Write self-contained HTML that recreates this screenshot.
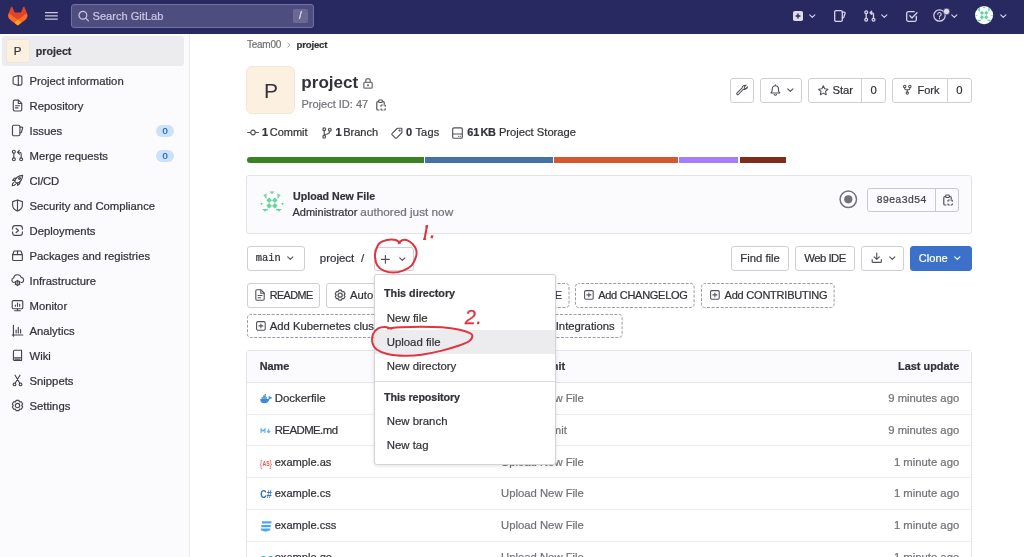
<!DOCTYPE html>
<html lang="en">
<head>
<meta charset="utf-8">
<title>Team00 / project · GitLab</title>
<style>
*{box-sizing:border-box;margin:0;padding:0}
html,body{width:1024px;height:557px;overflow:hidden;background:#fff}
body{font-family:"Liberation Sans",Arial,sans-serif;font-size:11.3px;color:#333238;position:relative;line-height:1;will-change:transform;-webkit-text-stroke:.22px currentColor}
.abs{position:absolute}
svg{display:block;overflow:visible}
.ico{position:absolute;fill:none;stroke:currentColor;stroke-width:1.2;stroke-linecap:round;stroke-linejoin:round;color:#535158}
a{color:inherit;text-decoration:none}
ul{list-style:none}
.t{position:absolute;white-space:nowrap;line-height:14px;height:14px}
.b{font-weight:700}
.mono{font-family:"Liberation Mono",monospace}
.gray{color:#737278}

/* navbar */
.navbar{position:absolute;left:0;top:0;width:1024px;height:34px;background:#292961;color:#dcdcea}
.navbar .ico{color:#d6d5ec;stroke-width:1.3}
.search{position:absolute;left:71px;top:4px;width:243px;height:24px;border-radius:3px;background:#4e4d80;border:1px solid #7170a2}
.search .ph{position:absolute;left:20.5px;top:4px;font-size:11.1px;color:#c9c7e6;line-height:14px;white-space:nowrap}
.kbd{position:absolute;left:221px;top:4px;width:15px;height:14px;border-radius:2px;background:#6a6996;color:#e3e2ee;font-size:10px;line-height:14px;text-align:center}

/* sidebar */
.sidebar{position:absolute;left:0;top:34px;width:190px;height:523px;background:#fbfafd;border-right:1px solid #eae9ee}
.ctx{position:absolute;left:2px;top:2px;width:182px;height:30px;border-radius:3px;background:#ececef}
.ctx .av{position:absolute;left:3.5px;top:3px;width:24px;height:24px;border-radius:3px;background:#fcf1e0;border:1px solid #f0e6d6;font-size:11.5px;line-height:22px;text-align:center;color:#333238}
.ctx .nm{position:absolute;left:33.8px;top:8px;font-weight:700;font-size:10.7px;line-height:14px}
.sb li{position:absolute;left:0;width:189px;height:25px}
.sb li .lbl{position:absolute;left:29.5px;top:5.5px;line-height:14px;white-space:nowrap;font-size:11.3px}
.sb li .ico{left:11px;top:6px;width:13px;height:13px;stroke-width:1.4;color:#47464d}
.badge{position:absolute;left:156px;top:6.5px;width:18px;height:12px;border-radius:6px;background:#cbe2f9;color:#1f5fa8;font-size:9.4px;line-height:12px;text-align:center}

/* buttons */
.btn{position:absolute;height:24px;border:1px solid #d0cfd5;border-radius:3px;background:#fff;font-size:11.3px;line-height:22px;white-space:nowrap;color:#333238}
.btn.dash{border-color:transparent}
.btn .db{position:absolute;left:-1px;top:-1px;fill:none;stroke:#9d9ca3;stroke-width:1;stroke-dasharray:3 1.53;stroke-dashoffset:1.5}
.btn .x{position:absolute;top:0}
.btn .cnt{position:absolute;top:0;height:23px;border-left:1px solid #d0cfd5;text-align:center}

/* project header */
.crumbs{position:absolute;left:247px;top:38px;height:14px;line-height:14px;font-size:10px;letter-spacing:-.25px;white-space:nowrap;color:#737278}
.crumbs b{color:#333238;font-weight:700;font-size:9.6px;letter-spacing:-.2px}
.crumbs .sep{display:inline-block;width:15.5px;height:6px;position:relative}
.crumbs .sep svg{position:absolute;left:6.3px;top:-.3px;fill:none;stroke:#9c9ba1;stroke-width:.9;stroke-linecap:round;stroke-linejoin:round}
.pavatar{position:absolute;left:246px;top:66px;width:49px;height:48px;padding-left:1px;-webkit-text-stroke:0;border-radius:6px;background:#fcf1e0;border:1px solid #f1e7d7;font-size:21px;line-height:47px;text-align:center;color:#333238}
.ptitle{position:absolute;left:301.3px;top:72.3px;font-size:17.1px;-webkit-text-stroke:0;line-height:22px;font-weight:700;white-space:nowrap;color:#333238}
.pid{position:absolute;left:301.5px;top:97.2px;font-size:11px;line-height:14px;white-space:nowrap;color:#737278}
.stat{position:absolute;top:125px;line-height:14px;font-size:11px;white-space:nowrap;color:#333238}
.stat b{font-weight:700}
.langbar{position:absolute;left:246.7px;top:156.7px;width:539px;height:6.2px}
.langbar i{position:absolute;top:0;height:6.2px;display:block}
.commit{position:absolute;left:246px;top:175px;width:726px;height:59px;border:1px solid #e3e2e8;border-radius:3px;background:#fbfafd}
.sha{position:absolute;left:867px;top:188px;width:91.5px;height:24px;border:1px solid #cbcad0;border-radius:3px}
.sha .mono{position:absolute;left:0;top:0;width:68px;height:22px;border-right:1px solid #cbcad0;font-size:10.4px;line-height:22px;text-align:center;color:#45444b}

/* dropdown */
.dd{position:absolute;left:374px;top:274px;width:182px;height:191px;background:#fff;border:1px solid #d4d3d9;border-radius:3px;box-shadow:0 1px 4px rgba(0,0,0,.12)}
.dd .h{position:absolute;left:9px;font-weight:700;font-size:10.75px;line-height:14px;white-space:nowrap}
.dd .i{position:absolute;left:0;width:180px;height:24px;padding-left:11.7px;font-size:11.4px;line-height:24px;white-space:nowrap}
.dd .i.hl{background:#ececef}
.dd hr{position:absolute;left:0;width:180px;top:106px;border:0;border-top:1px solid #dcdbe1}

/* file table */
.tbl{position:absolute;left:246px;top:350px;width:726px;height:230px;border:1px solid #e5e4ea;border-radius:3px;background:#fff}
.tbl .hd{position:absolute;left:0;top:0;width:724px;height:32px;background:#fbfafd;border-bottom:1px solid #e5e4ea;font-weight:700;font-size:10.9px}
.tbl .r{position:absolute;left:0;width:724px;height:32px;border-bottom:1px solid #ececef}
.tbl .c1{position:absolute;left:27.7px;top:var(--t,8px);line-height:14px;white-space:nowrap;font-size:11.4px}
.tbl .c2{position:absolute;left:254px;top:var(--t,8px);line-height:14px;white-space:nowrap;color:#737278;font-size:11.3px}
.tbl .c3{position:absolute;right:11.8px;top:var(--t,8px);line-height:14px;white-space:nowrap;color:#737278;font-size:11.3px}
.tbl .hd span{color:#333238;font-size:10.9px;top:8px}
.tbl .fi{position:absolute;left:12.5px;top:calc(var(--t,8px) + 1.5px);width:12px;height:12px}
.anno{position:absolute;left:0;top:0;width:1024px;height:557px;pointer-events:none}
</style>
</head>
<body>
<header class="navbar">
  <svg class="abs" style="left:0;top:0" width="36" height="34" viewBox="0 0 36 34">
    <path d="M11.1 7.1c.25-.6 1-.6 1.25 0l2.25 5.5h6.4l2.25-5.5c.25-.6 1-.6 1.25 0l2.7 7c.8 2.1.1 4.4-1.7 5.7l-6.9 5.1c-.5.35-1.1.35-1.6 0l-6.9-5.1c-1.8-1.3-2.5-3.6-1.7-5.7z" fill="#e24329"/>
    <path d="M8.8 13.3c-1 2.3-.4 4.9 1.6 6.4l4.1 3 3.3-2.9zM26.8 13.3c1 2.3.4 4.9-1.6 6.4l-4.1 3-3.3-2.9z" fill="#fc6d26"/>
    <path d="M14.4 22.6 17 24.9c.5.35 1.1.35 1.6 0l2.6-2.3-3.4-3z" fill="#fca326"/>
  </svg>
  <svg class="abs" style="left:45px;top:12px" width="13" height="8" viewBox="0 0 13 8"><path d="M0 .7h12.8M0 3.9h12.8M0 7.1h12.8" stroke="#c9c8e0" stroke-width="1.25" fill="none"/></svg>
  <div class="search">
    <svg class="ico" style="left:5.5px;top:5px;color:#c9c7e6;stroke-width:1.2" width="12" height="12" viewBox="0 0 12 12"><circle cx="4.9" cy="5.3" r="3.9"/><path d="M7.7 8.1 10.4 10.8"/></svg>
    <span class="ph">Search GitLab</span>
    <span class="kbd">/</span>
  </div>
  <nav>
    <svg class="abs" style="left:792.5px;top:10.7px" width="10" height="10" viewBox="0 0 10 10"><rect width="10" height="10" rx="1.8" fill="#dcdcea"/><path d="M5 2.6v4.8M2.6 5h4.8" stroke="#292961" stroke-width="1.4" fill="none"/></svg>
    <svg class="ico" style="left:809.3px;top:13.7px;stroke-width:1.2;color:#d6d5ec" width="6.6" height="4.6" viewBox="0 0 7 5"><path d="M.7.9 3.5 3.7 6.3.9"/></svg>
    <svg class="ico" style="left:834px;top:9.6px" width="12" height="12" viewBox="0 0 12 12"><rect x=".7" y=".7" width="7.6" height="10.6" rx="1.3"/><path d="M8.3 2.2h1.9a.8.8 0 0 1 .8 1L9.9 7a1.3 1.3 0 0 1-1.2.9h-.4"/></svg>
    <svg class="ico" style="left:863.5px;top:9.6px" width="12" height="12" viewBox="0 0 12 12"><circle cx="2.2" cy="2.2" r="1.4"/><circle cx="2.2" cy="9.8" r="1.4"/><circle cx="9.5" cy="9.8" r="1.4"/><path d="M2.2 3.6v4.8M9.5 8.4V4.5a1.7 1.7 0 0 0-1.7-1.7H6.2M7.7 1.2 6 2.8l1.7 1.6"/></svg>
    <svg class="ico" style="left:880.8px;top:13.7px;stroke-width:1.2;color:#d6d5ec" width="6.6" height="4.6" viewBox="0 0 7 5"><path d="M.7.9 3.5 3.7 6.3.9"/></svg>
    <svg class="ico" style="left:905.5px;top:9.6px" width="12" height="12" viewBox="0 0 12 12"><path d="M10.3 6.5v3.3a1.5 1.5 0 0 1-1.5 1.5H2.2A1.5 1.5 0 0 1 .7 9.8V3.2a1.5 1.5 0 0 1 1.5-1.5h6"/><path d="M3.8 5.8 6 8l5-5.3"/></svg>
    <svg class="ico" style="left:932.5px;top:9.3px;stroke-width:1.2" width="13" height="13" viewBox="0 0 13 13"><circle cx="6.5" cy="6.5" r="5.7"/><path d="M4.8 5.2a1.7 1.7 0 1 1 2.5 1.5c-.5.3-.8.6-.8 1.2M6.5 9.6v.1"/></svg>
    <svg class="abs" style="left:943.3px;top:7.5px" width="7" height="7" viewBox="0 0 7 7"><circle cx="3.5" cy="3.5" r="3.2" fill="#dcdcea" stroke="#292961" stroke-width=".6"/></svg>
    <svg class="ico" style="left:951.2px;top:13.7px;stroke-width:1.2;color:#d6d5ec" width="6.6" height="4.6" viewBox="0 0 7 5"><path d="M.7.9 3.5 3.7 6.3.9"/></svg>
    <svg class="abs" style="left:975.3px;top:6.3px" width="18.2" height="18.2" viewBox="0 0 23.6 23.6"><circle cx="11.8" cy="11.8" r="11.8" fill="#fff"/><g fill="#66d59e"><path d="M11.8 6.3 14.6 9.1 11.8 11.8 9 9.1zM11.8 11.8l2.8 2.8-2.8 2.8L9 14.6z" transform="translate(-2.8 0)"/><path d="M11.8 6.3 14.6 9.1 11.8 11.8 9 9.1zM11.8 11.8l2.8 2.8-2.8 2.8L9 14.6z" transform="translate(2.8 0)"/><path d="M9.4.6h4.8l-2.4 2.6zM6.4 2.4v3.8L3.2 4.3zM4.2 5.5h2.2v2.3zM17.2 2.4v3.8l3.2-1.9zM19.4 5.5h-2.2v2.3zM.3 11.8H3L1.2 14zM23.3 11.8h-2.7l1.8 2.2zM2.3 17.8h5.2l-2.6 2.5zM5.8 17.8h2.7L7 19.5zM21.3 17.8h-5.2l2.6 2.5zM17.8 17.8h-2.7l1.5 1.7z"/></g></svg>
    <svg class="ico" style="left:999.5px;top:13.7px;stroke-width:1.2;color:#d6d5ec" width="6.6" height="4.6" viewBox="0 0 7 5"><path d="M.7.9 3.5 3.7 6.3.9"/></svg>
  </nav>
</header>

<aside class="sidebar">
  <a class="ctx"><span class="av">P</span><span class="nm">project</span></a>
  <ul class="sb">
    <li style="top:34px"><a><svg class="ico" viewBox="0 0 16 16"><path d="M9 1.8 3.2 3.7a.9.9 0 0 0-.6.85v6.9a.9.9 0 0 0 .6.85L9 14.2z"/><path d="M9 2.3h2.6a1.8 1.8 0 0 1 1.8 1.8v7.8a1.8 1.8 0 0 1-1.8 1.8H9"/></svg><span class="lbl">Project information</span></a></li>
    <li style="top:59px"><a><svg class="ico" viewBox="0 0 16 16"><path d="M2.8 3a1.7 1.7 0 0 1 1.7-1.7h4.7l4 4V13a1.7 1.7 0 0 1-1.7 1.7h-7A1.7 1.7 0 0 1 2.8 13z"/><path d="M9 1.6V5.5h4M5.5 8.3h5M5.5 11h3"/></svg><span class="lbl">Repository</span></a></li>
    <li style="top:84px"><a><svg class="ico" viewBox="0 0 16 16"><path d="M1.8 3.3a1.7 1.7 0 0 1 1.7-1.7h5.8a1.7 1.7 0 0 1 1.7 1.7v9.4a1.7 1.7 0 0 1-1.7 1.7H3.5a1.7 1.7 0 0 1-1.7-1.7z"/><path d="M11 3.8h2.4a1 1 0 0 1 .95 1.3l-1.5 4.7a1.5 1.5 0 0 1-1.4 1H11"/></svg><span class="lbl">Issues</span><span class="badge">0</span></a></li>
    <li style="top:109px"><a><svg class="ico" viewBox="0 0 16 16"><circle cx="3.5" cy="3.3" r="1.8"/><circle cx="3.5" cy="12.7" r="1.8"/><circle cx="12.5" cy="12.7" r="1.8"/><path d="M3.5 5.1v5.8M12.5 10.9V6a2 2 0 0 0-2-2H8.3M10.3 1.8 8.1 4l2.2 2.2"/></svg><span class="lbl">Merge requests</span><span class="badge">0</span></a></li>
    <li style="top:134px"><a><svg class="ico" viewBox="0 0 16 16"><path d="M5.8 10.2 4.3 8.7C5.8 4.7 9 2 14.3 1.7c-.3 5.3-3 8.5-7 10z"/><path d="M5 8 2 7.8 4.3 5.2l2.3-.2M8 11l.2 3 2.6-2.3.2-2.3M3.3 10.5c-1.2.5-1.8 1.7-1.8 4 2.3 0 3.5-.6 4-1.8"/><circle cx="10.5" cy="5.5" r="1.1"/></svg><span class="lbl" style="letter-spacing:-.3px">CI/CD</span></a></li>
    <li style="top:159px"><a><svg class="ico" viewBox="0 0 16 16"><path d="M8 1.3 14 3.2v4.6c0 3.4-2.3 5.7-6 7-3.7-1.3-6-3.6-6-7V3.2z"/><path d="M8 1.5v13"/></svg><span class="lbl">Security and Compliance</span></a></li>
    <li style="top:184px"><a><svg class="ico" viewBox="0 0 16 16"><path d="M2 6.3V5a3 3 0 0 1 3-3h6a3 3 0 0 1 3 3v1.5M14 9.7V11a3 3 0 0 1-3 3H5a3 3 0 0 1-3-3V9.7"/><path d="M6.3 5.5 9.3 8l-3 2.5"/></svg><span class="lbl">Deployments</span></a></li>
    <li style="top:209px"><a><svg class="ico" viewBox="0 0 16 16"><path d="M2 7 3.8 2.5h8.4L14 7v6a1.2 1.2 0 0 1-1.2 1.2H3.2A1.2 1.2 0 0 1 2 13z"/><path d="M2 7h12M8 2.5V7"/></svg><span class="lbl">Packages and registries</span></a></li>
    <li style="top:234px"><a><svg class="ico" viewBox="0 0 16 16"><path d="M4 10.5H3.6a2.8 2.8 0 0 1-.4-5.5 4.8 4.8 0 0 1 9.3-.8 3.2 3.2 0 0 1 1 6.2h-1.3"/><circle cx="8" cy="11" r="2.5"/><circle cx="8" cy="11" r=".4"/><path d="M8 7.7v.8M8 13.5v.8M5.1 9.3l.7.4M10.2 12.3l.7.4M5.1 12.7l.7-.4M10.2 9.7l.7-.4"/></svg><span class="lbl">Infrastructure</span></a></li>
    <li style="top:259px"><a><svg class="ico" viewBox="0 0 16 16"><path d="M1.5 3.2a1.2 1.2 0 0 1 1.2-1.2h10.6a1.2 1.2 0 0 1 1.2 1.2v7.6a1.2 1.2 0 0 1-1.2 1.2H2.7a1.2 1.2 0 0 1-1.2-1.2z"/><path d="M4.5 14.5h7M8 12v2.5M5.3 9V7.5M8 9V5M10.7 9V6.5"/></svg><span class="lbl">Monitor</span></a></li>
    <li style="top:284px"><a><svg class="ico" viewBox="0 0 16 16"><path d="M3 1.5V15M1.5 13.5h13M6.3 11V7.5M9 11V4M11.8 11V7"/></svg><span class="lbl">Analytics</span></a></li>
    <li style="top:309px"><a><svg class="ico" viewBox="0 0 16 16"><path d="M3 12.3V3a1.5 1.5 0 0 1 1.5-1.5H13v9.3H4.5a1.5 1.5 0 0 0 0 3.4H13"/><path d="M13 10.8v3.4M5 12.5h6"/></svg><span class="lbl">Wiki</span></a></li>
    <li style="top:334px"><a><svg class="ico" viewBox="0 0 16 16"><circle cx="4.3" cy="12.8" r="1.7"/><circle cx="11.7" cy="12.8" r="1.7"/><path d="M5.1 11.3 11 1.5M10.9 11.3 5 1.5"/></svg><span class="lbl">Snippets</span></a></li>
    <li style="top:359px"><a><svg class="ico" viewBox="0 0 16 16"><path d="M5.52 3.43 L6.36 1.61 L9.64 1.61 L10.48 3.43 L10.72 3.57 L12.72 3.38 L14.36 6.23 L13.2 7.86 L13.2 8.14 L14.36 9.77 L12.72 12.62 L10.72 12.43 L10.48 12.57 L9.64 14.39 L6.36 14.39 L5.52 12.57 L5.28 12.43 L3.28 12.62 L1.64 9.77 L2.8 8.14 L2.8 7.86 L1.64 6.23 L3.28 3.38 L5.28 3.57z"/><circle cx="8" cy="8" r="2.7"/></svg><span class="lbl">Settings</span></a></li>
  </ul>
</aside>

<main>
  <div class="crumbs">Team00<span class="sep"><svg width="4" height="6" viewBox="0 0 4 6"><path d="M.8.7 3.1 3 .8 5.3"/></svg></span><b>project</b></div>
  <div class="pavatar">P</div>
  <h1 class="ptitle">project</h1>
  <svg class="ico" style="left:363px;top:77.8px;color:#737278;stroke-width:1.3" width="10" height="11" viewBox="0 0 10 11"><rect x=".8" y="4.4" width="8.4" height="5.8" rx="1"/><path d="M2.7 4.4V3a2.3 2.3 0 0 1 4.6 0v1.4"/><circle cx="5" cy="7.3" r=".5" fill="currentColor"/></svg>
  <div class="pid">Project ID: 47</div>
  <svg class="ico" style="left:376px;top:99px" width="10" height="12" viewBox="0 0 10 12"><path d="M2.5 2.5H1.8a1 1 0 0 0-1 1v6.5a1 1 0 0 0 1 1H3M6.5 2.5h.7a1 1 0 0 1 1 1V5"/><rect x="2.7" y="1" width="3.6" height="2.5" rx=".7"/><path d="M5 7.2v-.4a.8.8 0 0 1 .8-.8h.5M8 6h.5a.8.8 0 0 1 .8.8v.4M9.3 9.8v.4a.8.8 0 0 1-.8.8H8M6.3 11h-.5a.8.8 0 0 1-.8-.8v-.4"/></svg>
  <div class="btn" style="left:730px;top:78px;width:24px;height:25px"><svg class="ico" style="left:4.8px;top:5.3px;stroke-width:1.05" width="12" height="12" viewBox="0 0 12 12"><path d="M7.3 4.7 2 10a1 1 0 0 1-1.4-1.4L5.9 3.3A3 3 0 0 1 9.7.8L8 2.5l.3 1.2 1.2.3 1.7-1.7A3 3 0 0 1 7.3 4.7z" transform="translate(.3 .5)"/></svg></div>
  <div class="btn" style="left:760px;top:78px;width:42px;height:25px"><svg class="ico" style="left:8.5px;top:5.2px;stroke-width:1.15" width="10.7" height="11.7" viewBox="0 0 11 12"><path d="M1 9.2c1-.9 1.3-1.7 1.3-3.2V5a3.2 3.2 0 0 1 6.4 0v1c0 1.5.3 2.3 1.3 3.2zM4.3 10.8a1.3 1.3 0 0 0 2.4 0M5.5 1.6V.8"/></svg><svg class="ico" style="left:26px;top:9.2px;stroke-width:1.2" width="6.6" height="4.6" viewBox="0 0 7 5"><path d="M.7.9 3.5 3.7 6.3.9"/></svg></div>
  <div class="btn" style="left:808px;top:78px;width:78px;height:25px"><svg class="ico" style="left:9.3px;top:5.6px;stroke-width:1.2" width="10.6" height="10.6" viewBox="0 0 12 12"><path d="M6 .9 7.6 4.3l3.7.5L8.6 7.3l.7 3.7L6 9.2 2.7 11l.7-3.7L.7 4.8l3.7-.5z"/></svg><span class="x" style="left:23.4px">Star</span><span class="cnt" style="left:52.2px;width:23.8px">0</span></div>
  <div class="btn" style="left:892px;top:78px;width:80px;height:25px"><svg class="ico" style="left:9.6px;top:5.2px;stroke-width:1.25" width="8.6" height="11.6" viewBox="0 0 10 12"><circle cx="2" cy="2.2" r="1.4"/><circle cx="8" cy="2.2" r="1.4"/><circle cx="5" cy="9.8" r="1.4"/><path d="M2 3.6v.9a1.5 1.5 0 0 0 1.5 1.5h3A1.5 1.5 0 0 0 8 4.5v-.9M5 6v2.4"/></svg><span class="x" style="left:24.5px;font-size:11px">Fork</span><span class="cnt" style="left:53.8px;width:24.2px">0</span></div>
  <svg class="ico" style="left:247px;top:127.6px" width="12" height="9" viewBox="0 0 12 9"><circle cx="6" cy="4.5" r="2.3"/><path d="M.6 4.5h3M8.4 4.5h3"/></svg>
  <div class="stat" style="left:262px;word-spacing:-1.5px"><b>1</b> Commit</div>
  <svg class="ico" style="left:322px;top:126.5px;stroke-width:1.15" width="10" height="12" viewBox="0 0 10 12"><circle cx="2.2" cy="2.2" r="1.4"/><circle cx="2.2" cy="9.8" r="1.4"/><circle cx="7.8" cy="2.7" r="1.4"/><path d="M2.2 3.6v4.8M7.8 4.1c0 2-1.5 2.8-3.3 3.1-1.2.2-2.3.6-2.3 1.5"/></svg>
  <div class="stat" style="left:335.5px;word-spacing:-1.5px"><b>1</b> Branch</div>
  <svg class="ico" style="left:391px;top:126.5px;stroke-width:1.15" width="12" height="12" viewBox="0 0 12 12"><path d="M6.8 1.2h3.5a.6.6 0 0 1 .6.6v3.5a1 1 0 0 1-.3.7L5.5 11.1a.8.8 0 0 1-1.1 0L1 7.7a.8.8 0 0 1 0-1.1L6.1 1.5a1 1 0 0 1 .7-.3z"/><circle cx="8.6" cy="3.5" r=".5" fill="currentColor"/></svg>
  <div class="stat" style="left:406px;letter-spacing:.2px"><b>0</b> Tags</div>
  <svg class="ico" style="left:451.8px;top:126.5px;stroke-width:1.15" width="11" height="12" viewBox="0 0 11 12"><rect x=".7" y=".8" width="9.6" height="10.4" rx="1.3"/><path d="M.7 7h9.6M6.5 9.2h.2M8.3 9.2h.2"/></svg>
  <div class="stat" style="left:467.3px;font-size:11.2px"><b style="font-size:10.9px;word-spacing:-1.5px;letter-spacing:-.18px">61 KB</b> Project Storage</div>
  <div class="langbar">
    <i style="left:0;width:177px;background:#3a8123;border-radius:3px 0 0 3px"></i>
    <i style="left:178.2px;width:128.2px;background:#4472a6"></i>
    <i style="left:307.8px;width:123.1px;background:#d4572f"></i>
    <i style="left:432.3px;width:59.2px;background:#a27ef9"></i>
    <i style="left:492.9px;width:46.1px;background:#7e2d1a"></i>
  </div>
  <section class="commit"></section>
  <svg class="abs" style="left:259.6px;top:191.1px" width="24" height="24" viewBox="0 0 23.6 23.6"><circle cx="11.8" cy="11.8" r="11.6" fill="#fff" stroke="#ececef" stroke-width=".5"/><g fill="#66d59e"><path d="M11.8 6.3 14.6 9.1 11.8 11.8 9 9.1zM11.8 11.8l2.8 2.8-2.8 2.8L9 14.6z" transform="translate(-2.8 0)"/><path d="M11.8 6.3 14.6 9.1 11.8 11.8 9 9.1zM11.8 11.8l2.8 2.8-2.8 2.8L9 14.6z" transform="translate(2.8 0)"/><path d="M9.4.6h4.8l-2.4 2.6zM6.4 2.4v3.8L3.2 4.3zM4.2 5.5h2.2v2.3zM17.2 2.4v3.8l3.2-1.9zM19.4 5.5h-2.2v2.3zM.3 11.8H3L1.2 14zM23.3 11.8h-2.7l1.8 2.2zM2.3 17.8h5.2l-2.6 2.5zM5.8 17.8h2.7L7 19.5zM21.3 17.8h-5.2l2.6 2.5zM17.8 17.8h-2.7l1.5 1.7z"/></g></svg>
  <div class="t b" style="left:293px;top:188.8px;font-size:10.65px">Upload New File</div>
  <div class="t" style="left:292.5px;top:204.7px;font-size:11px">Administrator <span class="gray" style="font-size:11.75px">authored just now</span></div>
  <svg class="abs" style="left:838.9px;top:190.1px" width="18.6" height="18.6" viewBox="0 0 19 19"><circle cx="9.5" cy="9.5" r="8.4" fill="#fff" stroke="#737278" stroke-width="1.5"/><circle cx="9.5" cy="9.5" r="4.2" fill="#737278"/></svg>
  <div class="sha"><span class="mono">89ea3d54</span><svg class="ico" style="left:74.5px;top:5px" width="10" height="12" viewBox="0 0 10 12"><path d="M2.5 2.5H1.8a1 1 0 0 0-1 1v6.5a1 1 0 0 0 1 1H3M6.5 2.5h.7a1 1 0 0 1 1 1V5"/><rect x="2.7" y="1" width="3.6" height="2.5" rx=".7"/><path d="M5 7.2v-.4a.8.8 0 0 1 .8-.8h.5M8 6h.5a.8.8 0 0 1 .8.8v.4M9.3 9.8v.4a.8.8 0 0 1-.8.8H8M6.3 11h-.5a.8.8 0 0 1-.8-.8v-.4"/></svg></div>
  <div class="btn mono" style="left:247px;top:246px;width:58px;height:25px;font-size:10.4px"><span class="x" style="left:7.7px">main</span><svg class="ico" style="left:39px;top:9.2px;stroke-width:1.2" width="6.6" height="4.6" viewBox="0 0 7 5"><path d="M.7.9 3.5 3.7 6.3.9"/></svg></div>
  <div class="t" style="left:319.8px;top:250.7px;font-size:11.5px">project <span style="padding-left:3.5px">/</span></div>
  <div class="btn" style="left:374.3px;top:247px;width:39.5px;height:23.5px"><svg class="ico" style="left:6.1px;top:6.9px;stroke-width:1.3" width="8.8" height="8.8" viewBox="0 0 10 10"><path d="M5 .6v8.8M.6 5h8.8"/></svg><svg class="ico" style="left:23.3px;top:9.3px;stroke-width:1.2" width="6.6" height="4.6" viewBox="0 0 7 5"><path d="M.7.9 3.5 3.7 6.3.9"/></svg></div>
  <div class="btn" style="left:731px;top:246px;width:58px;height:25px"><span class="x" style="left:8.3px">Find file</span></div>
  <div class="btn" style="left:795px;top:246px;width:60px;height:25px"><span class="x" style="left:8.3px;letter-spacing:-.5px">Web IDE</span></div>
  <div class="btn" style="left:861px;top:246px;width:43px;height:25px"><svg class="ico" style="left:8.6px;top:4.7px" width="11.5" height="11.5" viewBox="0 0 12 12"><path d="M6 1v6.5M3.3 5 6 7.7 8.7 5M1.2 8v1.8a1 1 0 0 0 1 1h7.6a1 1 0 0 0 1-1V8"/></svg><svg class="ico" style="left:26.5px;top:9.2px;stroke-width:1.2" width="6.6" height="4.6" viewBox="0 0 7 5"><path d="M.7.9 3.5 3.7 6.3.9"/></svg></div>
  <div class="btn" style="left:909.5px;top:246px;width:62.7px;height:24.7px;background:#3b71c8;border-color:#3b71c8;color:#fff"><span class="x" style="left:8.3px;font-size:11.1px">Clone</span><svg class="ico" style="left:43.2px;top:9.2px;stroke-width:1.3;color:#fff" width="6.6" height="4.6" viewBox="0 0 7 5"><path d="M.7.9 3.5 3.7 6.3.9"/></svg></div>
  <div class="btn" style="left:247px;top:283px;width:73px;height:25px"><svg class="ico" style="left:7.4px;top:4.8px;stroke-width:1.1" width="10" height="12" viewBox="0 0 10 12"><path d="M.8 2a1.2 1.2 0 0 1 1.2-1.2H6L9.2 4v6a1.2 1.2 0 0 1-1.2 1.2H2A1.2 1.2 0 0 1 .8 10z"/><path d="M5.8 1v3.2H9M3 6.5h4M3 8.7h2.5"/></svg><span class="x" style="left:21.7px;font-size:10.8px;letter-spacing:-.55px">README</span></div>
  <div class="btn" style="left:326.4px;top:283px;width:140.6px;height:25px"><svg class="ico" style="left:6.6px;top:4.7px;stroke-width:1.6" width="12.3" height="12.3" viewBox="0 0 16 16"><path d="M5.52 3.43 L6.36 1.61 L9.64 1.61 L10.48 3.43 L10.72 3.57 L12.72 3.38 L14.36 6.23 L13.2 7.86 L13.2 8.14 L14.36 9.77 L12.72 12.62 L10.72 12.43 L10.48 12.57 L9.64 14.39 L6.36 14.39 L5.52 12.57 L5.28 12.43 L3.28 12.62 L1.64 9.77 L2.8 8.14 L2.8 7.86 L1.64 6.23 L3.28 3.38 L5.28 3.57z"/><circle cx="8" cy="8" r="2.7"/></svg><span class="x" style="left:22.6px">Auto DevOps enabled</span></div>
  <div class="btn dash" style="left:473.5px;top:283px;width:95.5px;height:25px"><svg class="db" width="95.5" height="25"><rect x=".5" y=".5" width="94.5" height="24" rx="3" ry="3"/></svg><svg class="ico" style="left:7.7px;top:6.1px;stroke-width:1.1" width="9.8" height="9.8" viewBox="0 0 10 10"><rect x=".6" y=".6" width="8.8" height="8.8" rx="1.3"/><path d="M5 3v4M3 5h4"/></svg><span class="x" style="left:20.9px;font-size:11px;letter-spacing:-.3px">Add LICENSE</span></div>
  <div class="btn dash" style="left:575.4px;top:283px;width:119.6px;height:25px"><svg class="db" width="119.6" height="25"><rect x=".5" y=".5" width="118.6" height="24" rx="3" ry="3"/></svg><svg class="ico" style="left:7.7px;top:6.1px;stroke-width:1.1" width="9.8" height="9.8" viewBox="0 0 10 10"><rect x=".6" y=".6" width="8.8" height="8.8" rx="1.3"/><path d="M5 3v4M3 5h4"/></svg><span class="x" style="left:21.8px;font-size:11px;letter-spacing:-.27px">Add CHANGELOG</span></div>
  <div class="btn dash" style="left:701.4px;top:283px;width:133.6px;height:25px"><svg class="db" width="133.6" height="25"><rect x=".5" y=".5" width="132.6" height="24" rx="3" ry="3"/></svg><svg class="ico" style="left:7.7px;top:6.1px;stroke-width:1.1" width="9.8" height="9.8" viewBox="0 0 10 10"><rect x=".6" y=".6" width="8.8" height="8.8" rx="1.3"/><path d="M5 3v4M3 5h4"/></svg><span class="x" style="left:22.2px;font-size:11px;letter-spacing:-.22px">Add CONTRIBUTING</span></div>
  <div class="btn dash r2" style="left:247px;top:314px;width:146px"><svg class="db" width="146" height="24"><rect x=".5" y=".5" width="145" height="23" rx="3" ry="3"/></svg><svg class="ico" style="left:7.7px;top:6.1px;stroke-width:1.1" width="9.8" height="9.8" viewBox="0 0 10 10"><rect x=".6" y=".6" width="8.8" height="8.8" rx="1.3"/><path d="M5 3v4M3 5h4"/></svg><span class="x" style="left:21.7px">Add Kubernetes cluster</span></div>
  <div class="btn dash r2" style="left:399px;top:314px;width:75.5px"><svg class="db" width="75.5" height="24"><rect x=".5" y=".5" width="74.5" height="23" rx="3" ry="3"/></svg><svg class="ico" style="left:7.7px;top:6.1px;stroke-width:1.1" width="9.8" height="9.8" viewBox="0 0 10 10"><rect x=".6" y=".6" width="8.8" height="8.8" rx="1.3"/><path d="M5 3v4M3 5h4"/></svg><span class="x" style="left:22px">Add Wiki</span></div>
  <div class="btn dash r2" style="left:481px;top:314px;width:141.6px"><svg class="db" width="141.6" height="24"><rect x=".5" y=".5" width="140.6" height="23" rx="3" ry="3"/></svg><svg class="ico" style="left:7.7px;top:6.1px;stroke-width:1.1" width="9.8" height="9.8" viewBox="0 0 10 10"><rect x=".6" y=".6" width="8.8" height="8.8" rx="1.3"/><path d="M5 3v4M3 5h4"/></svg><span class="x" style="left:21.6px">Configure Integrations</span></div>
  <section class="tbl">
    <div class="hd"><span class="c1" style="left:12.7px">Name</span><span class="c2">Last commit</span><span class="c3">Last update</span></div>
    <div class="r" style="top:32px;height:32px;--t:8px"><svg class="fi" viewBox="0 0 12 12"><path d="M.2 5.9h8.3c.4-.9.3-1.7-.1-2.4.8-.6 1.7-.3 2.1.6.7-.2 1.3 0 1.5.4-.4 1-1.3 1.5-2.4 1.4C8.8 8.7 7 10.3 4.2 10.3 1.7 10.3.2 8.8.2 5.9z" fill="#3d8bd3"/><path d="M1.5 4.2h5.6v1.5H1.5zM3.1 2.5h2.7v1.5H3.1zM4.6.9h1.3v1.4H4.6z" fill="#3d8bd3"/></svg><span class="c1" style="font-size:11.45px">Dockerfile</span><span class="c2">Upload New File</span><span class="c3">9 minutes ago</span></div>
    <div class="r" style="top:64px;height:31px;--t:8px"><svg class="fi" viewBox="0 0 12 12"><path d="M1.1 8V4l1.9 2.2L4.9 4v4" fill="none" stroke="#5aaff5" stroke-width="1.15"/><path d="M8.6 3.8v3.4M7 6.2l1.6 1.9 1.6-1.9z" fill="#5aaff5" stroke="#5aaff5" stroke-width=".9"/></svg><span class="c1" style="letter-spacing:-.55px">README.md</span><span class="c2">Initial commit</span><span class="c3">9 minutes ago</span></div>
    <div class="r" style="top:95px;height:32px;--t:9px"><svg class="fi" viewBox="0 0 12 12"><text x="6" y="9.5" text-anchor="middle" font-family="Liberation Sans, sans-serif" font-size="9.5" fill="#e6554b" textLength="12.4" lengthAdjust="spacingAndGlyphs">{<tspan font-size="6.3" font-weight="700" dy="-.9">AS</tspan><tspan dy=".9">}</tspan></text></svg><span class="c1" style="font-size:11.1px">example.as</span><span class="c2">Upload New File</span><span class="c3">1 minute ago</span></div>
    <div class="r" style="top:127px;height:32px;--t:8px"><svg class="fi" viewBox="0 0 12 12"><text x="6" y="9.8" text-anchor="middle" font-family="Liberation Sans, sans-serif" font-weight="700" font-size="10" fill="#2f74b8" textLength="11.5" lengthAdjust="spacingAndGlyphs">C#</text></svg><span class="c1" style="font-size:11.1px">example.cs</span><span class="c2">Upload New File</span><span class="c3">1 minute ago</span></div>
    <div class="r" style="top:159px;height:32px;--t:8px"><svg class="fi" viewBox="0 0 12 12"><path d="M2.1 1.3h9.5l-.3 2.3H1.8zM1.5 4.9h9.4l-.3 2.3H1.2zM.9 8.4h9.5l-.25 1.9-4.7 1.4L.7 10.3z" fill="#4ba6f5"/></svg><span class="c1" style="font-size:11.1px">example.css</span><span class="c2">Upload New File</span><span class="c3">1 minute ago</span></div>
    <div class="r" style="top:191px;height:32px;--t:8px"><svg class="fi" viewBox="0 0 12 12"><text x="6.5" y="9.5" text-anchor="middle" font-family="Liberation Sans, sans-serif" font-weight="700" font-style="italic" font-size="9" fill="#27a9c4">GO</text></svg><span class="c1" style="font-size:11.1px">example.go</span><span class="c2">Upload New File</span><span class="c3">1 minute ago</span></div>
  </section>
  <div class="dd">
    <div class="h" style="top:11px">This directory</div>
    <div class="i" style="top:30.5px;font-size:11.5px">New file</div>
    <div class="i hl" style="top:55px">Upload file</div>
    <div class="i" style="top:78.5px">New directory</div>
    <hr>
    <div class="h" style="top:114.5px;letter-spacing:-.12px">This repository</div>
    <div class="i" style="top:134px">New branch</div>
    <div class="i" style="top:158px">New tag</div>
  </div>
  <svg class="anno" viewBox="0 0 1024 557" fill="none" stroke="#df3540" stroke-width="2" stroke-linecap="round" stroke-linejoin="round">
    <path d="M399.9 242.8C399.2 242.3 397.8 240.4 395.6 239.9C393.4 239.4 389.6 239.4 386.9 239.9C384.2 240.4 381.3 241.3 379.4 243.2C377.5 245.1 376.3 248.9 375.6 251.3C374.9 253.7 374.8 255.4 375.1 257.7C375.4 260 375.8 263.1 377.2 265.3C378.6 267.5 381 269.4 383.7 270.6C386.4 271.8 390.2 272.6 393.4 272.6C396.6 272.6 400.1 271.8 403.1 270.6C406.2 269.4 409.6 267.6 411.7 265.3C413.8 263 415.2 259.1 416 256.6C416.8 254.1 416.8 252.3 416.3 250.2C415.8 248.1 414.3 245.8 412.8 244.2C411.3 242.5 409 241 407.4 240.3C405.8 239.6 404.4 239.7 403.1 239.9C401.9 240.1 400.6 241.1 399.9 241.6C399.2 242.1 399 242.9 398.8 243.2"/>
    <path d="M388 328.4C390.2 328.2 395.4 327.6 401 327.3C406.6 327 414.7 326.7 421.5 326.7C428.3 326.7 435.9 326.9 442 327.3C448.1 327.8 453.8 328.5 458.4 329.4C463 330.3 467.1 331.7 469.4 332.8C471.7 333.9 472.4 334.4 472.4 335.8C472.4 337.2 471.7 339.3 469.4 341C467.1 342.7 463 344.2 458.4 345.8C453.8 347.4 448.1 349.1 442 350.6C435.9 352.1 427.6 353.8 421.5 354.7C415.4 355.6 410.8 355.9 405.1 355.8C399.4 355.7 392.1 355.1 387.3 354C382.5 352.9 378.9 351.1 376.4 349.2C373.9 347.3 372.9 344.9 372.3 342.4C371.7 339.9 372.1 336.5 373 334.2C373.9 331.9 375.9 329.9 377.8 328.7C379.7 327.5 382.3 327.1 384.6 327.1C386.9 327.1 390.3 328.4 391.4 328.7"/>
    <clipPath id="c1"><path d="M426 223.3h2.7L425.9 240h-2.9zM430.3 234.5h4.2v4.5h-4.2z"/></clipPath>
    <text x="418.8" y="239.6" font-family="Liberation Sans, sans-serif" font-style="italic" font-size="22.5" letter-spacing="-1.5" fill="#df3540" stroke="#df3540" stroke-width=".25" clip-path="url(#c1)">1<tspan dy="-1.4">.</tspan></text>
    <text x="464.7" y="324.4" font-family="Liberation Sans, sans-serif" font-style="italic" font-size="20" letter-spacing=".4" fill="#df3540" stroke="#df3540" stroke-width=".3">2<tspan dy="-.6">.</tspan></text>
  </svg>
</main>
</body>
</html>
